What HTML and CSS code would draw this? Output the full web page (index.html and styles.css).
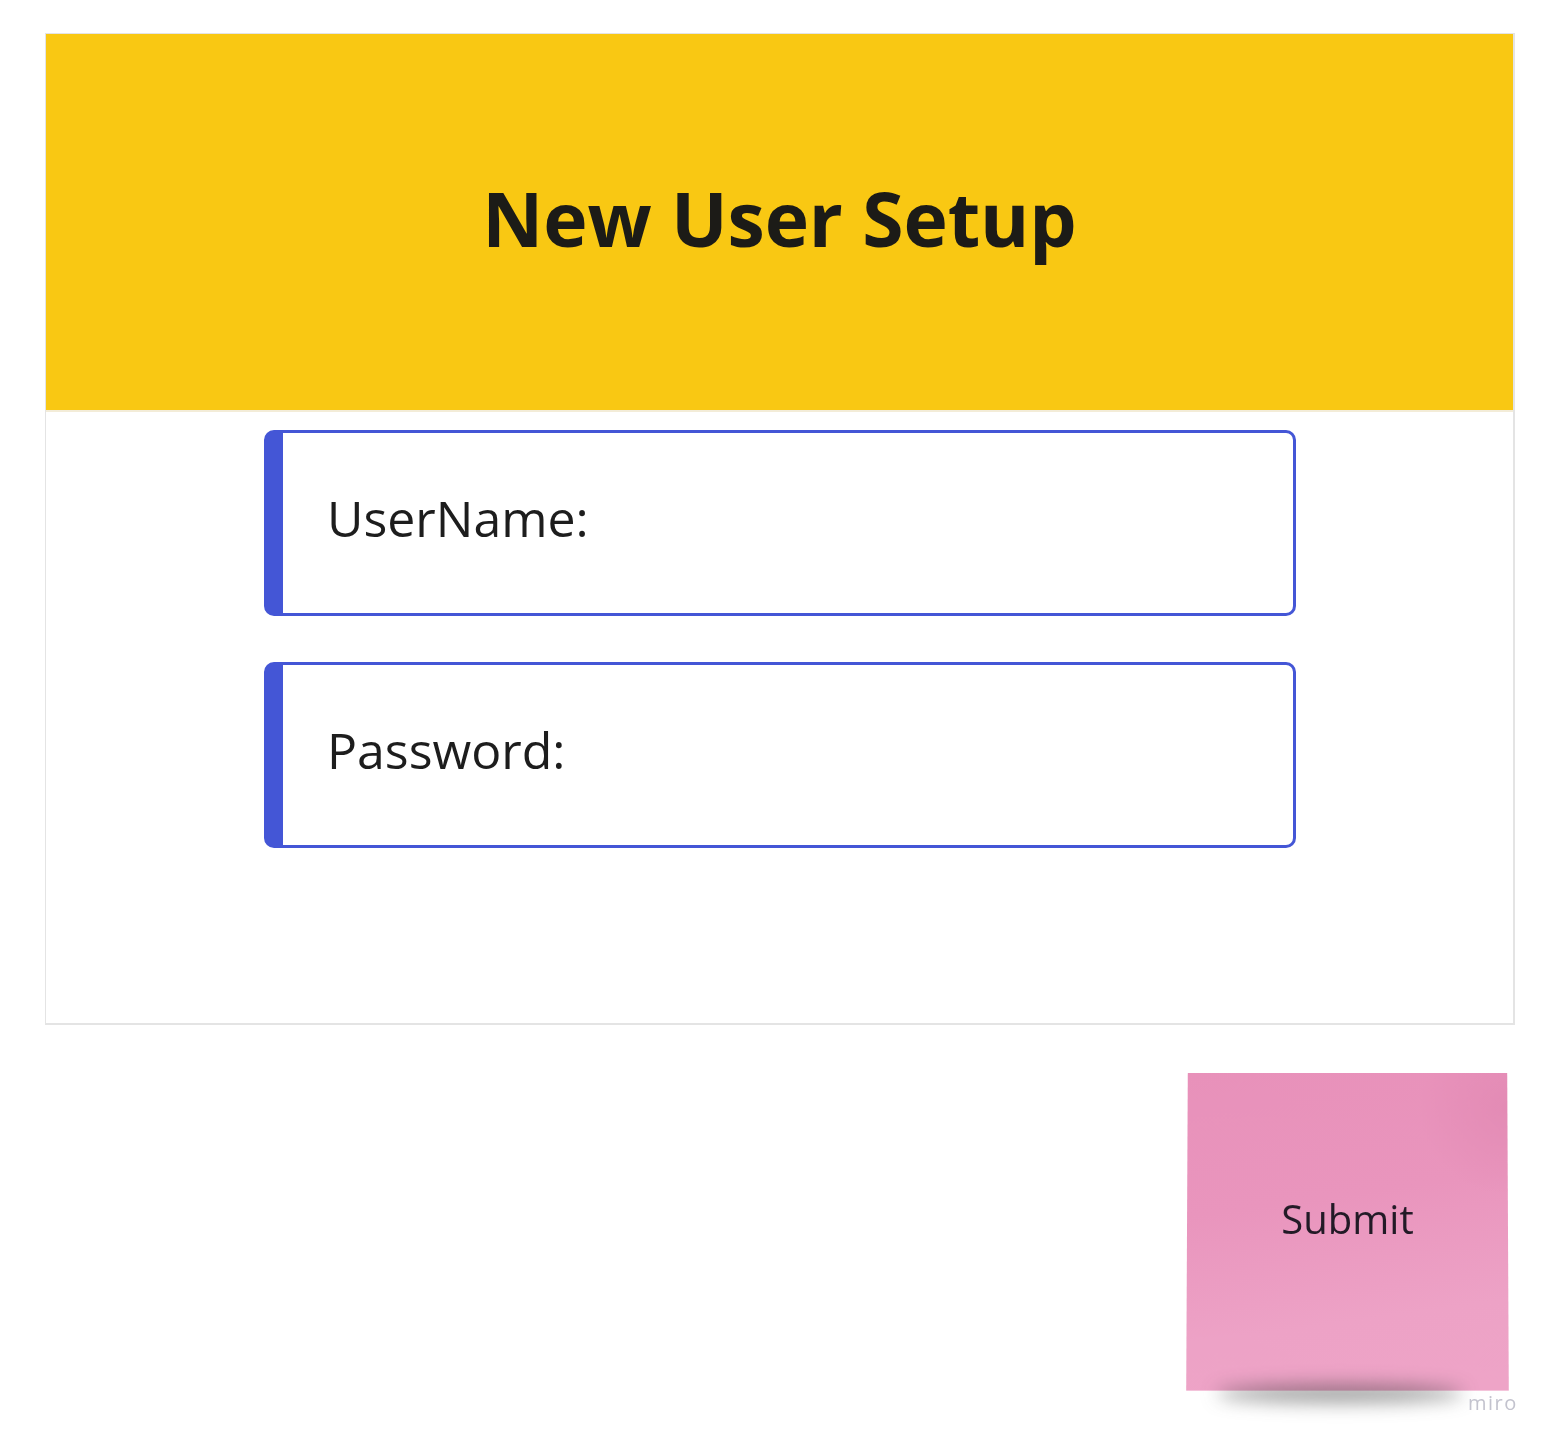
FILE: index.html
```html
<!DOCTYPE html>
<html lang="en">
<head>
<meta charset="utf-8">
<title>New User Setup</title>
<link rel="stylesheet" href="styles.css">
</head>
<body>
  <main class="board">
    <section class="frame">
      <header class="frame-header">
        <h1 class="title">New User Setup</h1>
      </header>
      <div class="fields">
        <div class="field"><span class="label">UserName:</span></div>
        <div class="field"><span class="label">Password:</span></div>
      </div>
    </section>
    <div class="sticky-row">
      <div class="sticky">
        <span class="sticky-text">Submit</span>
      </div>
    </div>
    <div class="watermark">miro</div>
  </main>
</body>
</html>
```
FILE: styles.css
```css
html, body {
  margin: 0;
  padding: 0;
  background: #ffffff;
}

body {
  font-family: "Open Sans", "Noto Sans", sans-serif;
  color: #1a1a1a;
  width: 1555px;
  height: 1446px;
  overflow: hidden;
}

.board {
  position: relative;
  padding: 33px 0 0 45px;
  height: 1446px;
  box-sizing: border-box;
}

.frame {
  width: 1470px;
  height: 992px;
  box-sizing: border-box;
  border: 1.5px solid #e4e4e4;
  border-bottom-width: 2.5px;
  border-right-width: 2.5px;
  background: #ffffff;
  display: flex;
  flex-direction: column;
}

.frame-header {
  height: 376px;
  background: #f9c813;
  border-bottom: 2px solid #f3ecd8;
  display: flex;
  align-items: center;
  justify-content: center;
}

.title {
  margin: 0;
  font-family: "Open Sans", sans-serif;
  font-weight: 700;
  font-size: 75px;
  line-height: 1;
  color: #1c1b17;
  letter-spacing: -0.1px;
  transform: translateY(-4px);
}

.fields {
  display: flex;
  flex-direction: column;
  gap: 46px;
  padding: 18px 0 0 218px;
}

.field {
  width: 1032px;
  height: 186px;
  box-sizing: border-box;
  border: 3px solid #4456d6;
  border-left: 19px solid #4456d6;
  border-radius: 10px;
  display: flex;
  align-items: center;
  padding-left: 44px;
  padding-bottom: 10px;
}

.label {
  font-size: 50px;
  font-weight: 400;
  color: #1d1d1d;
  line-height: 1;
}

.sticky-row {
  display: flex;
  justify-content: flex-end;
  width: 1463px;
  padding-top: 47px;
}

.sticky {
  position: relative;
  width: 321px;
  height: 318px;
  background: linear-gradient(172deg, #e891ba 0%, #e995bd 40%, #eda2c6 75%, #eea4c7 100%);
  display: flex;
  align-items: center;
  justify-content: center;
  transform: perspective(1400px) rotateX(2.5deg);
}

.sticky::before {
  content: "";
  position: absolute;
  right: 0;
  top: 0;
  width: 120px;
  height: 120px;
  background: radial-gradient(circle at 100% 30%, rgba(214, 120, 165, 0.3), rgba(214, 120, 165, 0) 60%);
}

.sticky::after {
  content: "";
  position: absolute;
  left: 30px;
  right: 45px;
  bottom: -12px;
  height: 18px;
  background: rgba(60, 60, 60, 0.5);
  filter: blur(9px);
  z-index: -1;
  border-radius: 50%;
}

.sticky-text {
  position: relative;
  font-size: 40px;
  color: #221a26;
  line-height: 1;
  transform: translateY(-12px);
}

.watermark {
  position: absolute;
  left: 1468px;
  top: 1389px;
  font-family: "Open Sans", sans-serif;
  font-size: 20px;
  letter-spacing: 1.5px;
  color: #c3c3ce;
}
```
